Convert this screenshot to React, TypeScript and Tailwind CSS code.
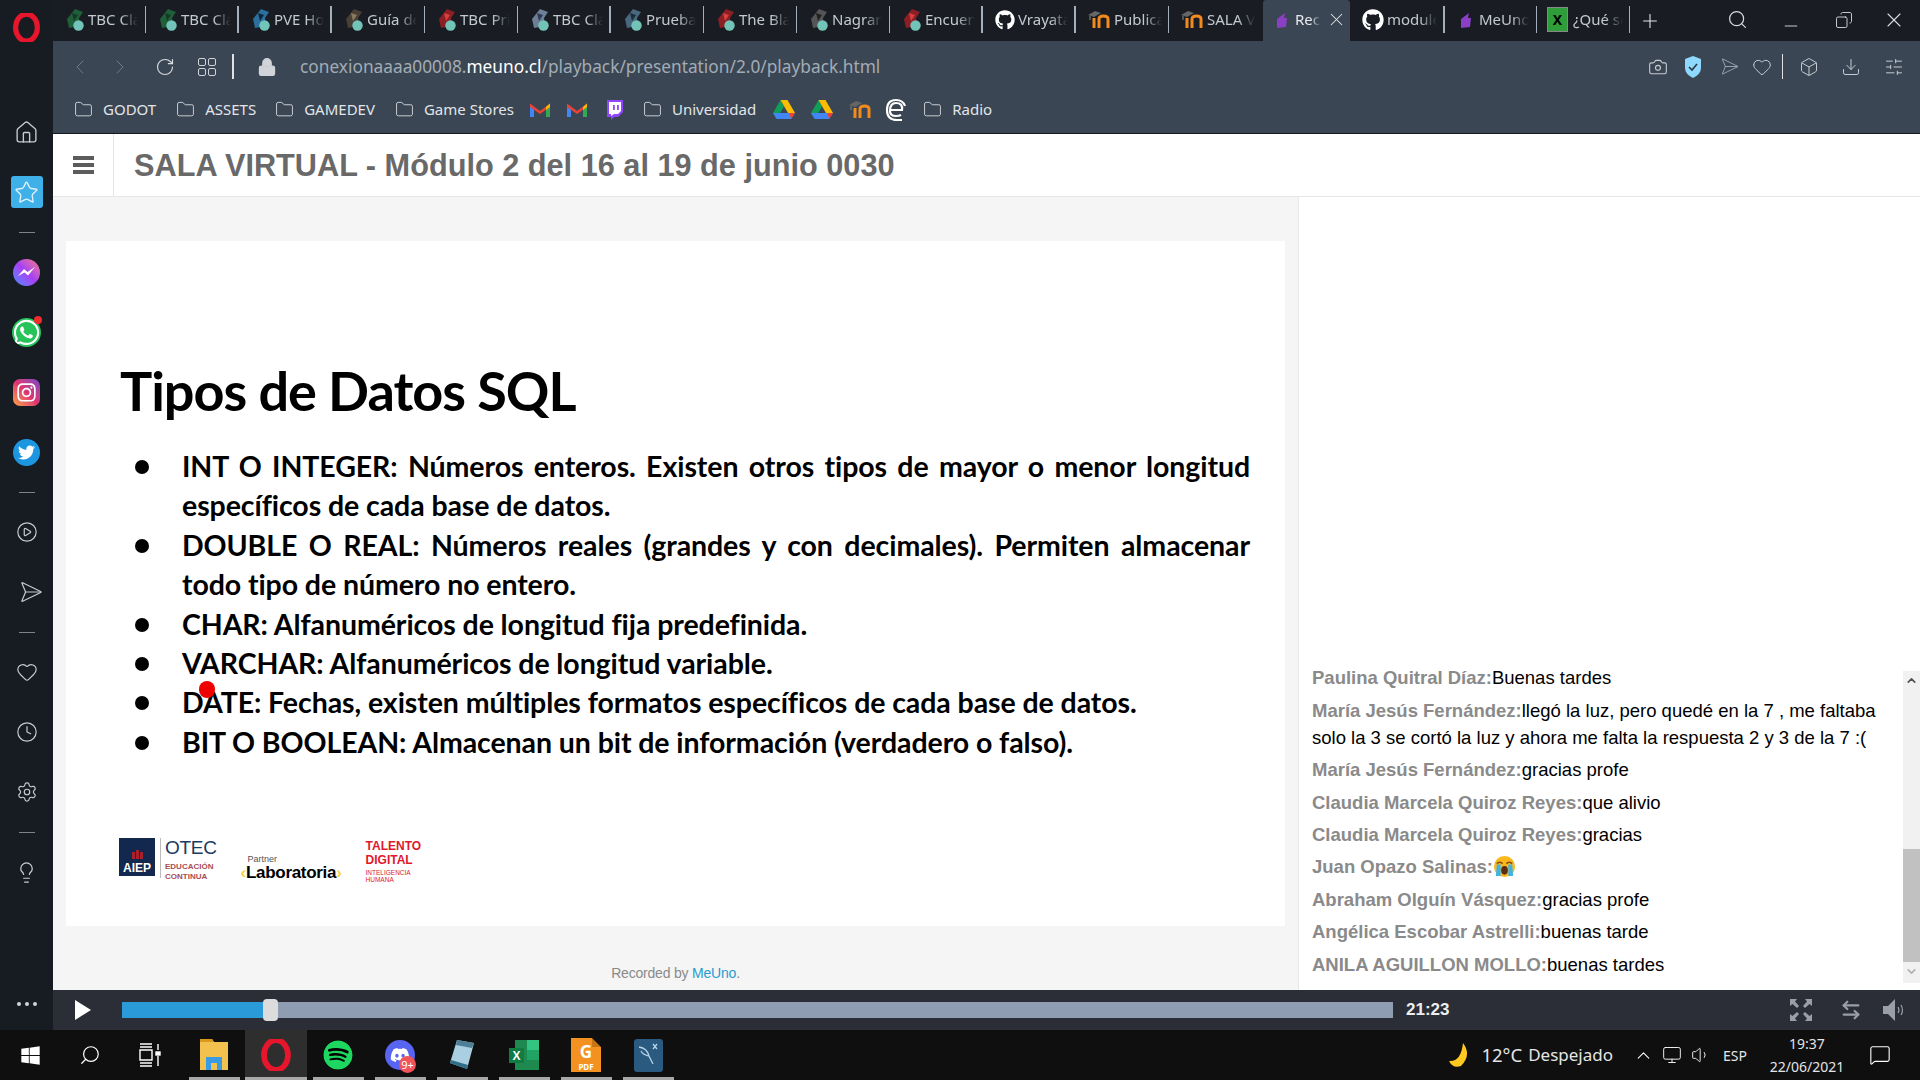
import React from "react";
import {
  Home, Star, CirclePlay, Send, Heart, Clock, Settings, Lightbulb, Camera, Box, Download, SlidersHorizontal,
  Search, X, Plus, Minus, ChevronLeft, ChevronRight, RotateCw, Lock, Folder, Copy, ChevronUp, ChevronDown, Volume1, Monitor, MessageSquare, ArrowLeftRight,
} from "lucide-react";
import { FaGithub, FaWhatsapp, FaInstagram, FaTwitter, FaSpotify, FaDiscord, FaWindows } from "react-icons/fa";

const ui = "font-['Noto_Sans',sans-serif]";

function Opera({ size = 28 }: { size?: number }) {
  return (
    <svg width={size} height={size} viewBox="0 0 28 28">
      <ellipse cx="14" cy="14" rx="10.5" ry="13" fill="none" stroke="#e8162c" strokeWidth="5" />
    </svg>
  );
}

function Moodle({ size = 20 }: { size?: number }) {
  return (
    <svg width={size} height={size} viewBox="0 0 22 20" fill="none">
      <path d="M0 5 L7 1 L13 3 L6 7 Z" fill="#666" />
      <path d="M2 6 V10" stroke="#777" strokeWidth="1.2" />
      <path d="M6 8 V18" stroke="#f28a1e" strokeWidth="3" />
      <path d="M11 18 V9 Q11 6 15.5 6 T20 9 V18" stroke="#f28a1e" strokeWidth="3" />
    </svg>
  );
}

function Gmail() {
  return (
    <svg width="20" height="16" viewBox="0 0 20 16">
      <path d="M0 3 V15 H4 V6 Z" fill="#4285f4" />
      <path d="M20 3 V15 H16 V6 Z" fill="#34a853" />
      <path d="M0 1.5 L10 9 L20 1.5 V5 L10 12 L0 5 Z" fill="#ea4335" />
      <path d="M16 5 L20 1.5 V5 L16 8 Z" fill="#fbbc04" />
    </svg>
  );
}

function Drive() {
  return (
    <svg width="22" height="19" viewBox="0 0 22 19">
      <path d="M7.5 0 L0 13 L3.7 19 L11 6.5 Z" fill="#0f9d58" />
      <path d="M14.5 0 L22 13 H15 L7.5 0 Z" fill="#fbbc04" />
      <path d="M4 13 H22 L18.2 19 H3.7 L0 13 Z" fill="#4285f4" />
      <path d="M16 13 H22 L18.2 19 Z" fill="#ea4335" />
    </svg>
  );
}

function Twitch() {
  return (
    <svg width="18" height="22" viewBox="0 0 18 22">
      <path d="M1 1 H17 V13 L12 18 H8 L5 21 V18 H1 Z" fill="#9146ff" />
      <path d="M3 3 H15 V12 L12 15 H8 L5 17 V15 H3 Z" fill="#fff" />
      <rect x="7" y="6" width="1.8" height="5" fill="#9146ff" />
      <rect x="11" y="6" width="1.8" height="5" fill="#9146ff" />
    </svg>
  );
}

function WowIcon({ color, alt }: { color: string; alt: string }) {
  return (
    <svg width="22" height="24" viewBox="0 0 22 24">
      <path d="M10 1 L18 4 L14 10 L15 18 L4 20 L2 11 Z" fill={color} />
      <path d="M7 5 L13 7 L9 13 Z" fill={alt} />
      <circle cx="13.5" cy="17.5" r="5.2" fill="#72c4b8" />
    </svg>
  );
}

function Crying() {
  return (
    <svg width="23" height="23" viewBox="0 0 24 24" className="inline-block align-[-5px]">
      <circle cx="12" cy="12" r="11" fill="#fbb81c" />
      <path d="M4 9 Q7 6 10 9 M14 9 Q17 6 20 9" stroke="#7a4a10" strokeWidth="1.5" fill="none" />
      <ellipse cx="12" cy="16" rx="3.5" ry="4.5" fill="#5c2c10" />
      <path d="M4 10 H8 V22 H3 Z M16 10 H20 L21 22 H16 Z" fill="#3db4e8" />
    </svg>
  );
}

const tabs: { label: string; kind: string; color?: string; alt?: string; sep: string }[] = [
  { label: "TBC Cla", kind: "wow", color: "#1f5f3a", alt: "#173a26", sep: "w-px" },
  { label: "TBC Cla", kind: "wow", color: "#1f5f3a", alt: "#173a26", sep: "w-[2px]" },
  { label: "PVE Ho", kind: "wow", color: "#2a6f9e", alt: "#10263a", sep: "w-[2px]" },
  { label: "Guía de", kind: "wow", color: "#4a3f34", alt: "#8a7a60", sep: "w-px" },
  { label: "TBC Pri", kind: "wow", color: "#8c1f24", alt: "#d64040", sep: "w-px" },
  { label: "TBC Cla", kind: "wow", color: "#6d7f96", alt: "#2d3a5a", sep: "w-[2px]" },
  { label: "Prueba", kind: "wow", color: "#48687e", alt: "#1c2c3a", sep: "w-px" },
  { label: "The Bla", kind: "wow", color: "#8c1f24", alt: "#d64040", sep: "w-px" },
  { label: "Nagrar", kind: "wow", color: "#555", alt: "#222", sep: "w-px" },
  { label: "Encuen", kind: "wow", color: "#8c1f24", alt: "#d64040", sep: "w-[2px]" },
  { label: "Vrayata", kind: "gh", sep: "w-[2px]" },
  { label: "Publica", kind: "moodle", sep: "w-px" },
  { label: "SALA V", kind: "moodle", sep: "w-0" },
];

function FavPurple() {
  return (
    <svg width="18" height="20" viewBox="0 0 18 20">
      <path d="M4 9 L12 3 L11 8 L14 8 L13 17 L4 18 Z" fill="#8b3fc4" />
    </svg>
  );
}

function Tab({ t }: { t: (typeof tabs)[number] }) {
  return (
    <div className="flex items-center h-[41px] w-[93px] shrink-0 pl-[12px] pb-[2px]">
      <span className={`${t.kind === "moodle" ? "w-[25px]" : "w-[22px]"} shrink-0 flex items-center`}>
        {t.kind === "wow" && <WowIcon color={t.color!} alt={t.alt!} />}
        {t.kind === "gh" && <FaGithub size={20} color="#fff" />}
        {t.kind === "moodle" && <Moodle size={22} />}
      </span>
      <span className={`ml-[1px] ${t.kind === "moodle" ? "w-[48px]" : "w-[50px]"} overflow-hidden whitespace-nowrap text-[15px] text-[#c4c9cf] [mask-image:linear-gradient(to_right,black_65%,transparent)]`}>
        {t.label}
      </span>
      <span className={`${t.sep} h-[27px] ml-auto bg-[#a4afbc]`} />
    </div>
  );
}

function TabStrip() {
  return (
    <div className="h-[41px] flex items-center bg-[#191c23] shrink-0">
      {tabs.map((t, i) => (
        <Tab key={i} t={t} />
      ))}
      <div className="h-[41px] w-[87px] ml-[1px] bg-[#3a4653] rounded-t-[3px] flex items-center pl-[10px] pb-[2px] shrink-0">
        <FavPurple />
        <span className="ml-[4px] w-[26px] overflow-hidden whitespace-nowrap text-[15px] text-[#e6e8ea] [mask-image:linear-gradient(to_right,black_60%,transparent)]">Rec</span>
        <X size={21} strokeWidth={1.2} color="#e2e5e8" className="ml-[5px]" />
      </div>
      <div className="flex items-center h-[41px] w-[95px] pl-[12px] pb-[2px] shrink-0">
        <FaGithub size={22} color="#fff" />
        <span className="ml-[3px] w-[50px] overflow-hidden whitespace-nowrap text-[15px] text-[#c4c9cf] [mask-image:linear-gradient(to_right,black_65%,transparent)]">module</span>
        <span className="w-[2px] h-[27px] ml-auto bg-[#a4afbc]" />
      </div>
      <div className="flex items-center h-[41px] w-[92px] pl-[12px] pb-[2px] shrink-0">
        <FavPurple />
        <span className="ml-[4px] w-[50px] overflow-hidden whitespace-nowrap text-[15px] text-[#c4c9cf] [mask-image:linear-gradient(to_right,black_65%,transparent)]">MeUno</span>
        <span className="w-px h-[27px] ml-auto bg-[#a4afbc]" />
      </div>
      <div className="flex items-center h-[41px] w-[93px] pl-[10px] pb-[2px] shrink-0">
        <span className="w-[21px] h-[25px] bg-[#2f9e3a] border border-[#888] flex items-center justify-center text-black text-[14px] font-bold leading-none">X</span>
        <span className="ml-[5px] w-[50px] overflow-hidden whitespace-nowrap text-[15px] text-[#c4c9cf] [mask-image:linear-gradient(to_right,black_65%,transparent)]">¿Qué se</span>
        <span className="w-px h-[27px] ml-auto bg-[#a4afbc]" />
      </div>
      <Plus size={22} strokeWidth={1.2} color="#e4e6e8" className="ml-[9px]" />
      <div className="flex-1 flex items-center justify-end h-full text-[#d8dbdf] pr-[2px] pb-[2px]">
        <span className="w-[53px] flex justify-center"><Search size={21} strokeWidth={1.4} /></span>
        <span className="w-[53px] flex justify-center"><Minus size={20} strokeWidth={1.1} className="mt-[12px]" /></span>
        <span className="w-[53px] flex justify-center"><Copy size={18} strokeWidth={1.2} className="-scale-x-100" /></span>
        <span className="w-[48px] flex justify-center"><X size={24} strokeWidth={1.1} /></span>
      </div>
    </div>
  );
}

function Cell({ w, children }: { w: string; children: React.ReactNode }) {
  return <span className={`${w} flex items-center justify-center shrink-0`}>{children}</span>;
}

function Shield() {
  return (
    <svg width="18" height="22" viewBox="0 0 18 22">
      <path d="M9 0 L17 3 V12 Q17 18 9 22 Q1 18 1 12 V3 Z" fill="#8fd8ff" />
      <path d="M5 11 L8 14 L13 8" stroke="#2b3540" strokeWidth="1.6" fill="none" />
    </svg>
  );
}

function AddressBar() {
  return (
    <div className="h-[51px] shrink-0 bg-[#3a4653] flex items-center pl-[7px] text-[#c6ccd2]">
      <Cell w="w-[40px]"><ChevronLeft size={24} strokeWidth={1} color="#707b87" /></Cell>
      <Cell w="w-[40px]"><ChevronRight size={24} strokeWidth={1} color="#707b87" /></Cell>
      <Cell w="w-[50px]"><RotateCw size={20} strokeWidth={1.4} color="#d8dbdf" /></Cell>
      <Cell w="w-[34px]">
        <span className="grid grid-cols-2 gap-[2px]">
          {[0, 1, 2, 3].map((i) => (
            <span key={i} className="w-[8px] h-[8px] rounded-[2px] border border-[#d0d4d8]" />
          ))}
        </span>
      </Cell>
      <Cell w="w-[18px]"><span className="w-[2px] h-[25px] bg-[#dfe2e5]" /></Cell>
      <Cell w="w-[50px]"><Lock size={20} strokeWidth={1.6} fill="#d0d4d8" color="#d0d4d8" /></Cell>
      <span className="ml-[8px] text-[17.3px] whitespace-nowrap text-[#a3acb5]">
        conexionaaaa00008.<span className="text-white">meuno.cl</span>/playback/presentation/2.0/playback.html
      </span>
      <div className="ml-auto flex items-center">
        <Cell w="w-[36px]"><Camera size={20} strokeWidth={1.3} /></Cell>
        <Cell w="w-[34px]"><Shield /></Cell>
        <Cell w="w-[32px]"><Send size={19} strokeWidth={1.2} color="#9aa3ac" className="rotate-45" /></Cell>
        <Cell w="w-[40px]"><Heart size={20} strokeWidth={1.2} /></Cell>
        <span className="w-px h-[25px] bg-[#dfe2e5]" />
        <Cell w="w-[51px]"><Box size={20} strokeWidth={1.2} /></Cell>
        <Cell w="w-[34px]"><Download size={20} strokeWidth={1.2} /></Cell>
        <Cell w="w-[52px]"><SlidersHorizontal size={20} strokeWidth={1.2} /></Cell>
      </div>
    </div>
  );
}

function Bm({ label, ml }: { label: string; ml: string }) {
  return (
    <span className={`${ml} flex items-center shrink-0`}>
      <Folder size={19} strokeWidth={1.2} color="#d0d4d8" />
      <span className="ml-[10px] text-[15px] text-[#e2e5e8] whitespace-nowrap">{label}</span>
    </span>
  );
}

function Curl() {
  return (
    <svg width="22" height="24" viewBox="0 0 22 24" fill="none" stroke="#fff" strokeWidth="2.2">
      <path d="M5 12 H17 Q18 5 11 5 Q5 5 5 13 Q5 18 11 18 Q14 18 16 17" />
      <path d="M20 8 Q18 2 11 2 Q2 2 2 12 Q2 22 12 22 H17" />
    </svg>
  );
}

function Bookmarks() {
  return (
    <div className="h-[42px] shrink-0 bg-[#3a4653] border-b border-[#14171c] flex items-center pl-[21px] pb-[6px]">
      <Bm label="GODOT" ml="ml-0" />
      <Bm label="ASSETS" ml="ml-[20px]" />
      <Bm label="GAMEDEV" ml="ml-[19px]" />
      <Bm label="Game Stores" ml="ml-[20px]" />
      <span className="ml-[16px]"><Gmail /></span>
      <span className="ml-[17px]"><Gmail /></span>
      <span className="ml-[19px]"><Twitch /></span>
      <Bm label="Universidad" ml="ml-[19px]" />
      <span className="ml-[17px]"><Drive /></span>
      <span className="ml-[16px]"><Drive /></span>
      <span className="ml-[16px]"><Moodle size={22} /></span>
      <span className="ml-[14px]"><Curl /></span>
      <Bm label="Radio" ml="ml-[16px]" />
    </div>
  );
}

function SideRow({ children }: { children: React.ReactNode }) {
  return <div className="h-[60px] flex items-center justify-center relative">{children}</div>;
}
function SideSep() {
  return (
    <div className="h-[20px] flex items-center justify-center">
      <span className="w-[16px] h-px bg-[#7d838b]" />
    </div>
  );
}

function Sidebar() {
  return (
    <div className="w-[53px] shrink-0 bg-[#171b22] flex flex-col text-[#c8ccd0]">
      <div className="h-[102px] pt-[13px] flex justify-center items-start"><Opera size={29} /></div>
      <SideRow><Home size={25} strokeWidth={1.3} /></SideRow>
      <SideRow>
        <span className="w-[32px] h-[32px] rounded-[3px] bg-[#3fb0e8] flex items-center justify-center">
          <Star size={25} strokeWidth={1.3} color="#dff3fd" />
        </span>
      </SideRow>
      <SideSep />
      <SideRow>
        <span className="w-[27px] h-[27px] rounded-full bg-gradient-to-tr from-[#1f86ff] via-[#a63df5] to-[#ff6a7d] flex items-center justify-center">
          <svg width="19" height="12" viewBox="0 0 19 12"><path d="M1 10 L7 3 L10.5 6 L18 1 L11 9.5 L7.5 6.5 Z" fill="#fff" /></svg>
        </span>
      </SideRow>
      <SideRow>
        <FaWhatsapp size={29} color="#fff" className="bg-[#25c35a] rounded-full" />
        <span className="absolute top-[14px] right-[11px] w-[8px] h-[8px] rounded-full bg-[#f02b2b]" />
      </SideRow>
      <SideRow>
        <span className="w-[27px] h-[27px] rounded-[7px] bg-gradient-to-tr from-[#f9a13a] via-[#e03070] to-[#7a3cc8] flex items-center justify-center">
          <FaInstagram size={21} color="#fff" />
        </span>
      </SideRow>
      <SideRow>
        <span className="w-[27px] h-[27px] rounded-full bg-[#1d96e2] flex items-center justify-center">
          <FaTwitter size={17} color="#fff" />
        </span>
      </SideRow>
      <SideSep />
      <SideRow><CirclePlay size={22} strokeWidth={1.3} /></SideRow>
      <SideRow><Send size={24} strokeWidth={1.2} className="rotate-45" /></SideRow>
      <SideSep />
      <SideRow><Heart size={22} strokeWidth={1.3} /></SideRow>
      <SideRow><Clock size={22} strokeWidth={1.3} /></SideRow>
      <SideRow><Settings size={22} strokeWidth={1.3} /></SideRow>
      <SideSep />
      <SideRow><Lightbulb size={23} strokeWidth={1.3} /></SideRow>
      <div className="mt-auto h-[52px] flex items-start justify-center gap-[4px] pt-[24px]">
        <span className="w-[4px] h-[4px] rounded-full bg-[#d0d4d8]" />
        <span className="w-[4px] h-[4px] rounded-full bg-[#d0d4d8]" />
        <span className="w-[4px] h-[4px] rounded-full bg-[#d0d4d8]" />
      </div>
    </div>
  );
}

function Header() {
  return (
    <div className="h-[63px] shrink-0 bg-white border-b border-[#e6e6e6] flex font-['Liberation_Sans',sans-serif]">
      <div className="w-[61px] border-r border-[#e6e6e6] flex flex-col items-center justify-center gap-[3px]">
        <span className="w-[21px] h-[4px] bg-[#5c5c5c]" />
        <span className="w-[21px] h-[4px] bg-[#5c5c5c]" />
        <span className="w-[21px] h-[4px] bg-[#5c5c5c]" />
      </div>
      <div className="pl-[20px] pt-[3px] flex items-center text-[30.7px] font-bold text-[#696969] whitespace-nowrap">
        SALA VIRTUAL - Módulo 2 del 16 al 19 de junio 0030
      </div>
    </div>
  );
}

const bullets: React.ReactNode[] = [
  "INT O INTEGER: Números enteros. Existen otros tipos de mayor o menor longitud específicos de cada base de datos.",
  "DOUBLE O REAL: Números reales (grandes y con decimales). Permiten almacenar todo tipo de número no entero.",
  "CHAR: Alfanuméricos de longitud fija predefinida.",
  "VARCHAR: Alfanuméricos de longitud variable.",
  "DATE: Fechas, existen múltiples formatos específicos de cada base de datos.",
  "BIT O BOOLEAN: Almacenan un bit de información (verdadero o falso).",
];

function SlideLogos() {
  return (
    <div className="flex items-start mt-[76px] ml-[-1px] h-[44px] font-['Liberation_Sans',sans-serif]">
      <div className="w-[36px] h-[38px] bg-[#12284e] flex flex-col items-center justify-end text-white font-bold text-[12px] leading-[16px]">
        <span className="flex items-end gap-[1px] mb-[1px]">
          <span className="w-[3px] h-[7px] bg-[#a8202a]" />
          <span className="w-[3px] h-[9px] bg-[#a8202a]" />
          <span className="w-[3px] h-[7px] bg-[#a8202a]" />
        </span>
        AIEP
      </div>
      <span className="w-px h-[40px] bg-[#bbb] ml-[5px]" />
      <div className="ml-[4px] flex flex-col">
        <span className="text-[#1c3a60] text-[19px] leading-[20px] tracking-[-0.3px]">OTEC</span>
        <span className="mt-[4px] text-[#a84d52] text-[8px] leading-[10px] font-bold">EDUCACIÓN</span>
        <span className="text-[#a84d52] text-[8px] leading-[10px] font-bold">CONTINUA</span>
      </div>
      <div className="ml-[24px] mt-[17px] flex flex-col">
        <span className="ml-[7px] text-[9px] leading-[9px] text-[#555]">Partner</span>
        <span className="text-[17px] leading-[18px] font-bold text-black whitespace-nowrap tracking-[-0.3px]">
          <span className="text-[#f5d33a]">‹</span>Laboratoria<span className="text-[#f5d33a]">›</span>
        </span>
      </div>
      <div className="ml-[24px] mt-[1px] flex flex-col text-[#e0182d]">
        <span className="text-[12px] leading-[14px] font-bold">TALENTO</span>
        <span className="text-[12px] leading-[14px] font-bold">DIGITAL</span>
        <span className="text-[6.5px] leading-[7px] mt-[2px]">INTELIGENCIA</span>
        <span className="text-[6.5px] leading-[7px]">HUMANA</span>
      </div>
    </div>
  );
}

function Slide() {
  return (
    <div className="relative h-[685px] bg-white pl-[54px] pr-[35px] pt-[112px] font-['Lato',sans-serif] text-black">
      <h1 className="text-[54px] leading-[75px] font-bold tracking-[-1px] whitespace-nowrap">Tipos de Datos SQL</h1>
      <div className="mt-[19px]">
        {bullets.map((b, i) => (
          <div key={i} className="flex">
            <span className="w-[14px] h-[14px] rounded-full bg-black ml-[15px] mt-[13px] shrink-0" />
            <p className="ml-[33px] flex-1 text-[28.5px] leading-[39.4px] font-bold text-justify tracking-[-0.08px]">{b}</p>
          </div>
        ))}
      </div>
      <SlideLogos />
      <span className="absolute left-[133px] top-[440px] w-[16px] h-[17px] rounded-full bg-[#f00000]" />
    </div>
  );
}

const chat: [string, React.ReactNode][] = [
  ["Paulina Quitral Díaz:", "Buenas tardes"],
  ["María Jesús Fernández:", "llegó la luz, pero quedé en la 7 , me faltaba solo la 3 se cortó la luz y ahora me falta la respuesta 2 y 3 de la 7 :("],
  ["María Jesús Fernández:", "gracias profe"],
  ["Claudia Marcela Quiroz Reyes:", "que alivio"],
  ["Claudia Marcela Quiroz Reyes:", "gracias"],
  ["Juan Opazo Salinas:", <Crying key="c" />],
  ["Abraham Olguín Vásquez:", "gracias profe"],
  ["Angélica Escobar Astrelli:", "buenas tarde"],
  ["ANILA AGUILLON MOLLO:", "buenas tardes"],
];

function Chat() {
  return (
    <div className="w-[622px] shrink-0 bg-white border-l border-[#e8e8e8] flex flex-col justify-end pb-[7px] font-['Liberation_Sans',sans-serif]">
      <div className="h-[312px] flex">
        <div className="flex-1 pl-[13px] pr-[20px] flex flex-col justify-end">
          {chat.map(([n, m], i) => (
            <p key={i} className="text-[18.5px] leading-[27px] mb-[5.4px] text-black">
              <b className="text-[#8a8a8a]">{n}</b>
              {m}
            </p>
          ))}
        </div>
        <div className="w-[17px] bg-[#f1f1f1] flex flex-col items-center">
          <ChevronUp size={13} strokeWidth={3} color="#505050" className="mt-[3px]" />
          <div className="w-full h-[113px] mt-[162px] bg-[#c1c1c1]" />
          <ChevronDown size={13} strokeWidth={3} color="#b0b0b0" className="mt-[3px]" />
        </div>
      </div>
    </div>
  );
}

function Main() {
  return (
    <div className="flex-1 flex min-h-0">
      <div className="flex-1 bg-[#f5f5f5] flex flex-col pl-[13px] pr-[13px] pt-[44px] font-['Liberation_Sans',sans-serif]">
        <Slide />
        <p className="mt-[37px] text-center text-[14px] leading-[20px] text-[#8a8a8a] tracking-[-0.2px]">
          Recorded by <span className="text-[#2a9bd0]">MeUno</span>.
        </p>
      </div>
      <Chat />
    </div>
  );
}

function Controls() {
  return (
    <div className="h-[40px] shrink-0 bg-[#2b2e37] flex items-center font-['Liberation_Sans',sans-serif]">
      <div className="w-[69px] flex justify-center pr-[9px]">
        <span className="w-0 h-0 border-y-[10px] border-y-transparent border-l-[16px] border-l-white" />
      </div>
      <div className="w-[1271px] flex items-center shrink-0">
        <span className="w-[141px] h-[16px] bg-[#2a9ad8]" />
        <span className="w-[15px] h-[22px] rounded-[4px] bg-[#dcdcdc]" />
        <span className="flex-1 h-[16px] bg-[#8e9db1]" />
      </div>
      <span className="ml-[13px] text-[17px] font-bold text-[#eeeeee]">21:23</span>
      <div className="ml-auto flex items-center text-[#8f939b] pr-[8px]">
        <span className="w-[50px] flex justify-center">
          <svg width="22" height="22" viewBox="0 0 22 22" fill="#9a9ea6">
            <path d="M0 0 H7 L5 2.5 L9 7 L7 9 L2.5 5 L0 7 Z M22 0 V7 L19.5 5 L15 9 L13 7 L17 2.5 L15 0 Z M0 22 V15 L2.5 17 L7 13 L9 15 L5 19.5 L7 22 Z M22 22 H15 L17 19.5 L13 15 L15 13 L19.5 17 L22 15 Z" />
          </svg>
        </span>
        <span className="w-[50px] flex justify-center"><ArrowLeftRight size={22} strokeWidth={2.4} color="#9a9ea6" /></span>
        <span className="w-[36px] flex justify-center">
          <svg width="22" height="24" viewBox="0 0 22 24" fill="none">
            <path d="M0 8 H5 L12 1 V23 L5 16 H0 Z" fill="#9a9ea6" />
            <path d="M15 9 Q17 12 15 15 M18 7 Q21 12 18 17" stroke="#9a9ea6" strokeWidth="1.2" />
          </svg>
        </span>
      </div>
    </div>
  );
}

function TaskApp({ children, active }: { children: React.ReactNode; active?: boolean }) {
  return (
    <div className={`relative w-[62px] h-full flex items-center justify-center ${active ? "bg-[#2e2e2e]" : ""}`}>
      {children}
      <span className={`absolute bottom-0 h-[3px] bg-[#a8a8a8] ${active ? "left-0 right-0" : "left-[6px] right-[5px]"}`} />
    </div>
  );
}

function Taskbar() {
  return (
    <div className={`h-[50px] shrink-0 bg-[#0f0f0f] flex items-center text-white ${ui}`}>
      <span className="w-[60px] flex justify-center"><FaWindows size={21} /></span>
      <span className="w-[60px] flex justify-center"><Search size={22} strokeWidth={1.3} className="-scale-x-100" /></span>
      <span className="w-[60px] flex justify-center">
        <svg width="22" height="24" viewBox="0 0 22 24" fill="none" stroke="#fff" strokeWidth="1.4">
          <path d="M1 1 H13 M1 4 H13 M1 7 H13 V17 H1 Z M1 20 H13 M1 23 H13 M19 1 V7 M19 13 V23" />
          <rect x="17" y="9" width="4" height="3" fill="#fff" />
        </svg>
      </span>
      <div className="h-full flex ml-[3px]">
        <TaskApp>
          <svg width="28" height="32" viewBox="0 0 28 32">
            <path d="M0 0 H12 L14 3 H28 V31 H0 Z" fill="#f2c14e" />
            <path d="M0 0 H12 L14 3 H0 Z" fill="#d99a1c" />
            <path d="M6 18 H22 V31 H17 V24 H11 V31 H6 Z" fill="#3b9be0" />
          </svg>
        </TaskApp>
        <TaskApp active><Opera size={32} /></TaskApp>
        <TaskApp><FaSpotify size={30} color="#1ed760" className="bg-black rounded-full" /></TaskApp>
        <TaskApp>
          <span className="relative w-[30px] h-[30px] rounded-full bg-[#5865f2] flex items-center justify-center">
            <FaDiscord size={20} color="#fff" />
            <span className="absolute -right-[1px] -bottom-[3px] w-[17px] h-[17px] rounded-full bg-[#f0535a] text-[11px] leading-[17px] text-center text-white">9+</span>
          </span>
        </TaskApp>
        <TaskApp>
          <svg width="28" height="32" viewBox="0 0 28 32">
            <path d="M9 1 L26 4 L19 30 L2 24 Z" fill="#a9cfe0" />
            <path d="M9 1 L26 4 L24 9 L8 6 Z" fill="#4f7f96" />
            <path d="M2 24 L19 30 L20 26 L3 21 Z" fill="#2f6d88" />
          </svg>
        </TaskApp>
        <TaskApp>
          <svg width="30" height="32" viewBox="0 0 30 32">
            <rect x="6" y="1" width="24" height="30" fill="#1f8a50" />
            <rect x="18" y="1" width="12" height="10" fill="#33c481" />
            <rect x="18" y="11" width="12" height="10" fill="#21a366" />
            <rect x="0" y="9" width="15" height="15" fill="#107c41" />
            <text x="7.5" y="21" fontSize="12" fontWeight="700" fill="#fff" textAnchor="middle" fontFamily="Liberation Sans">X</text>
          </svg>
        </TaskApp>
        <TaskApp>
          <span className="relative w-[30px] h-[34px] bg-[#f39220] flex flex-col items-center justify-end text-white">
            <span className="absolute top-0 right-0 w-0 h-0 border-t-[9px] border-t-[#0f0f0f] border-l-[9px] border-l-[#c77417]" />
            <span className="text-[17px] leading-[18px] font-bold">G</span>
            <span className="text-[8px] leading-[11px] font-bold">PDF</span>
          </span>
        </TaskApp>
        <TaskApp>
          <span className="w-[29px] h-[33px] rounded-[3px] bg-[#2a5a80] flex items-center justify-center">
            <svg width="22" height="26" viewBox="0 0 22 26" fill="none" stroke="#b9d3e4" strokeWidth="1.3">
              <path d="M2 5 Q10 6 12 14 L16 22 M12 14 Q6 13 4 9 M16 2 L20 7 M20 2 L16 7" />
            </svg>
          </span>
        </TaskApp>
      </div>
      <div className="ml-auto flex items-center h-full">
        <svg width="24" height="26" viewBox="0 0 24 26" className="mr-[9px]">
          <path d="M15 1 Q24 13 13 24 Q5 27 1 19 Q13 20 15 1 Z" fill="#ffc91f" />
        </svg>
        <span className="text-[18.5px] text-[#e4e4e4] whitespace-nowrap">12°C</span>
        <span className="ml-[6px] text-[17px] text-[#e4e4e4] whitespace-nowrap">Despejado</span>
        <ChevronUp size={21} strokeWidth={1.2} className="ml-[20px]" />
        <Monitor size={20} strokeWidth={1.1} className="ml-[8px]" />
        <Volume1 size={20} strokeWidth={1.1} className="ml-[9px]" />
        <span className="ml-[12px] text-[14px] text-[#e4e4e4]">ESP</span>
        <div className="ml-[19px] w-[82px] flex flex-col items-center text-[14px] leading-[23px] text-[#e4e4e4]">
          <span>19:37</span>
          <span>22/06/2021</span>
        </div>
        <MessageSquare size={22} strokeWidth={1.2} className="ml-[21px] mr-[29px]" />
      </div>
    </div>
  );
}

export default function App() {
  return (
    <div className={`w-[1920px] h-[1080px] overflow-hidden flex flex-col ${ui}`}>
      <div className="flex-1 flex min-h-0">
        <Sidebar />
        <div className="flex-1 flex flex-col min-w-0">
          <TabStrip />
          <AddressBar />
          <Bookmarks />
          <Header />
          <Main />
          <Controls />
        </div>
      </div>
      <Taskbar />
    </div>
  );
}
